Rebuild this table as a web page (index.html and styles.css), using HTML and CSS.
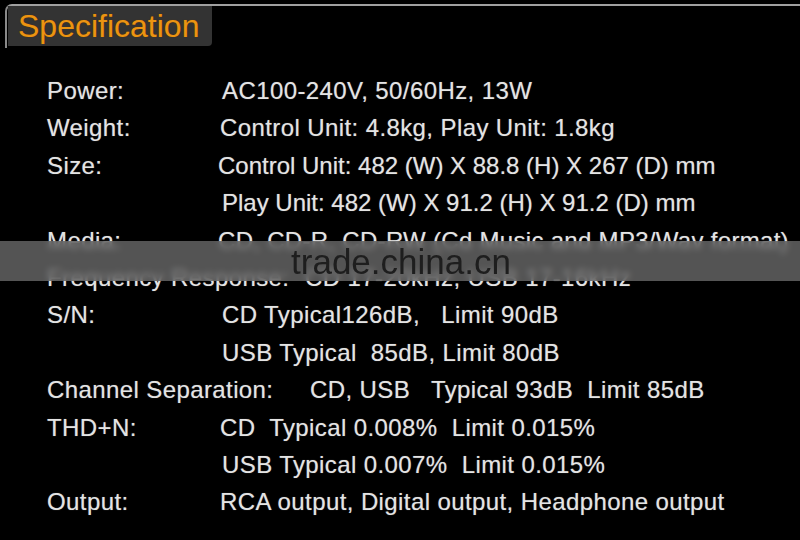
FILE: index.html
```html
<!DOCTYPE html>
<html lang="en">
<head>
    <meta charset="UTF-8">
    <meta name="viewport" content="width=device-width, initial-scale=1.0">
    <title>Specification</title>
    <link rel="stylesheet" href="styles.css">
</head>
<body>
    <div class="page">
        <div class="header">
            <div class="tab">Specification</div>
        </div>
        <div class="specs">
            <div class="row"><span class="label">Power:</span><span class="value">AC100-240V, 50/60Hz, 13W</span></div>
            <div class="row"><span class="label">Weight:</span><span class="value shift-l">Control Unit: 4.8kg, Play Unit: 1.8kg</span></div>
            <div class="row"><span class="label">Size:</span><span class="value shift-l2 tight">Control Unit: 482 (W) X 88.8 (H) X 267 (D) mm</span></div>
            <div class="row"><span class="label"></span><span class="value tight">Play Unit: 482 (W) X 91.2 (H) X 91.2 (D) mm</span></div>
            <div class="row"><span class="label">Media:</span><span class="value shift-l2 media">CD, CD-R, CD-RW (Cd Music and MP3/Wav format)</span></div>
            <div class="row"><span class="label">Frequency Response:</span><span class="value wide">CD 17-20kHz, USB 17-16kHz</span></div>
            <div class="row"><span class="label">S/N:</span><span class="value">CD Typical126dB,&nbsp;&nbsp; Limit 90dB</span></div>
            <div class="row"><span class="label"></span><span class="value">USB Typical&nbsp; 85dB, Limit 80dB</span></div>
            <div class="row"><span class="label">Channel Separation:</span><span class="value wider">CD, USB&nbsp;&nbsp; Typical 93dB&nbsp; Limit 85dB</span></div>
            <div class="row"><span class="label">THD+N:</span><span class="value shift-l">CD&nbsp; Typical 0.008%&nbsp; Limit 0.015%</span></div>
            <div class="row"><span class="label"></span><span class="value">USB Typical 0.007%&nbsp; Limit 0.015%</span></div>
            <div class="row"><span class="label">Output:</span><span class="value shift-l">RCA output, Digital output, Headphone output</span></div>
        </div>
        <div class="watermark"><span>trade.china.cn</span></div>
    </div>
</body>
</html>
```

FILE: styles.css
```css
body {
    margin: 0;
    background-color: #000;
    font-family: "Liberation Sans", Arial, sans-serif;
    width: 800px;
    height: 540px;
    overflow: hidden;
}
.page {
    position: relative;
    height: 540px;
}
.header {
    margin: 4px 0 0 5px;
    height: 42px;
    border-top: 2px solid #a0a0a0;
    border-left: 2px solid #8a8a8a;
    border-top-left-radius: 7px;
}
.tab {
    width: 194px;
    height: 40px;
    margin-left: 1px;
    padding-left: 10px;
    background-color: #333;
    border-bottom-right-radius: 4px;
    color: #eb9412;
    font-size: 32px;
    line-height: 40px;
    text-shadow: 0 0 1px #5a3400;
}
.specs {
    padding: 24px 0 0 47px;
}
.row {
    display: flex;
    height: 37.4px;
    line-height: 37.4px;
    font-size: 24px;
    letter-spacing: 0.4px;
    color: #e4e4e4;
    white-space: nowrap;
    text-shadow: 0 0 1px rgba(255, 255, 255, 0.4);
}
.label {
    width: 175px;
    flex-shrink: 0;
}
.value.tight {
    letter-spacing: 0;
}
.value.media {
    letter-spacing: 0.3px;
}
.value.shift-l {
    margin-left: -2px;
}
.value.shift-l2 {
    margin-left: -4px;
}
.row .value.wide {
    margin-left: 83px;
}
.row .value.wider {
    margin-left: 88px;
}
.watermark {
    position: absolute;
    left: 0;
    right: 0;
    top: 237px;
    height: 40px;
    background-color: rgba(105, 105, 105, 0.8);
    backdrop-filter: blur(3px);
    text-align: center;
}
.watermark span {
    display: inline-block;
    margin-left: 2px;
    font-size: 35px;
    line-height: 42px;
    color: #1e1e1e;
}
```
